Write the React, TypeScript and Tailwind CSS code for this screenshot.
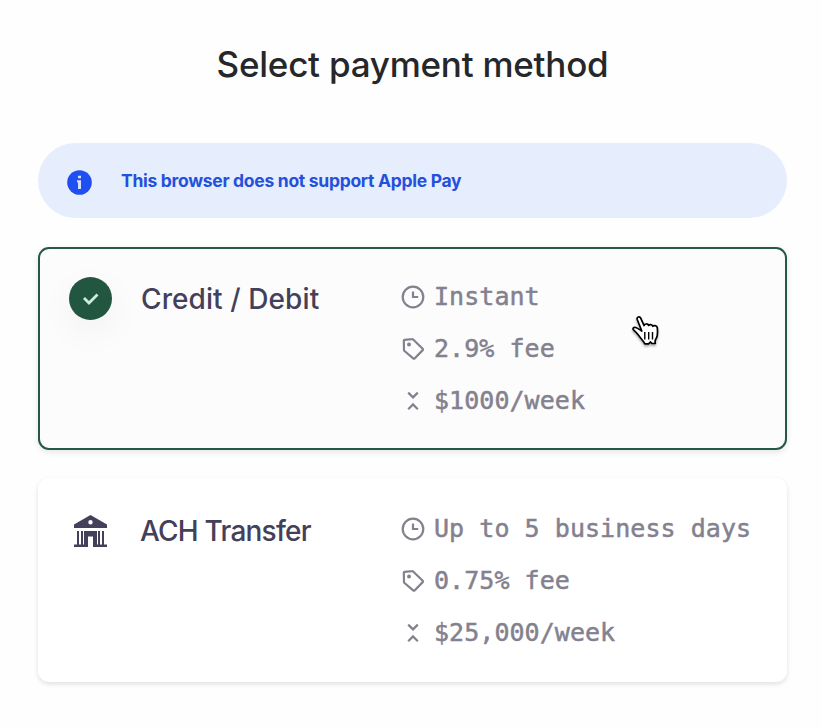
import React from "react";

const SANS = "font-['Inter','Liberation_Sans',sans-serif]";
const MONO = "font-['DejaVu_Sans_Mono','Liberation_Mono',monospace]";

function ClockIcon() {
  return (
    <svg width="24" height="24" viewBox="0 0 24 24" fill="none" stroke="currentColor" strokeWidth="2.2">
      <circle cx="12" cy="12" r="10.3" />
      <path d="M12 6.6V12h5.2" />
    </svg>
  );
}

function TagIcon() {
  return (
    <svg width="24" height="24" viewBox="0 0 24 24" fill="none" stroke="currentColor" strokeWidth="2.2" strokeLinejoin="round">
      <path d="M3.8 2.8 11 2.200q.8-.1 1.400.5l9.300 9q.7.7 0 1.400l-8.100 8.300q-.7.7-1.400 0L3.500 14q-.5-.5-.5-1.300L2.800 3.800q0-.9 1-1z" />
      <circle cx="8" cy="7.600" r="2" fill="currentColor" stroke="none" />
    </svg>
  );
}

function LimitIcon() {
  return (
    <svg width="24" height="24" viewBox="0 0 24 24" fill="none" stroke="currentColor" strokeWidth="2.2">
      <path d="m7.200 3.600 4.800 4.800 4.800-4.800M7.200 20.200l4.800-4.800 4.800 4.800" />
    </svg>
  );
}

function BankIcon() {
  return (
    <svg width="34" height="34" viewBox="0 0 34 34" fill="#444059">
      <path fillRule="evenodd" d="M16.500 1 33 10.600V14H0v-3.400zM16.500 6a2.200 2.200 0 1 0 0 4.400 2.200 2.200 0 0 0 0-4.400z" />
      <path d="M3 17h2v14H3zM7 17h2v14H7zM24 17h2v14h-2zM28 17h2v14h-2z" />
      <path d="M10 17h13v13.500h10V33H19V22.500h-5V33H0v-2.500h10z" />
    </svg>
  );
}

function Pointer() {
  return (
    <svg width="32" height="36" viewBox="0 0 32 36" className="absolute left-[590px] top-[65px] drop-shadow-[0_2px_1px_rgba(0,0,0,0.3)]">
      <path
        d="M11.800 17 7.200 5.500C6.400 3 9.700 1.900 10.700 4.200l3.400 7.400c.4-2.100 3.900-2.200 4.500-.1.700-1.400 3.600-1.200 4.200.8.900-1.300 4.100-.9 4.500 1.200.3 3.600.6 6.600-.5 9.700l-1.700 3.500.2 2.800-3.600-.2-1.100-1.300-2.100 1.800h-3.600c-1.500-3-3.500-4.600-5.300-7.100-1.900-2.500-3.300-4.600-5.600-6.400-2.200-1.700-.3-3.500 1.800-2.800 2.100.7 3.900 2.200 6 3.500z"
        fill="white"
        stroke="black"
        strokeWidth="1.700"
        strokeLinejoin="round"
      />
      <path d="M14.800 18v7.500M18.700 18v7.500M22.500 18v7.500" stroke="black" strokeWidth="1.400" />
    </svg>
  );
}

function Details({ time, fee, limit }: { time: string; fee: string; limit: string }) {
  const rows = [
    { icon: <ClockIcon />, text: time },
    { icon: <TagIcon />, text: fee },
    { icon: <LimitIcon />, text: limit },
  ];
  return (
    <ul className={`flex flex-col gap-4 text-[25px] leading-9 tracking-[0.050px] text-[#84818f] ${MONO}`}>
      {rows.map((row) => (
        <li key={row.text} className="flex items-center gap-[9px] whitespace-nowrap">
          {row.icon}
          <span className="[-webkit-text-stroke:0.5px_currentColor]">{row.text}</span>
        </li>
      ))}
    </ul>
  );
}

export default function App() {
  return (
    <main className={`flex h-[728px] w-full flex-col bg-[#fefefe] pl-[38px] pr-[35px] ${SANS}`}>
      <h1 className="mt-10 text-center text-[35px] font-medium leading-12 tracking-[-0.230px] text-[#25272a]">Select payment method</h1>

      <div className="mt-[55px] flex h-[75px] shrink-0 items-center rounded-full bg-[#e6edfc] pl-[29px]">
        <svg width="25" height="25" viewBox="0 0 25 25" className="mt-1">
          <circle cx="12.500" cy="12.500" r="12.300" fill="#1f4ff0" />
          <path d="M11 5.700h3v2.600h-3zM10 10.300h4V19h-3v-6.500h-1z" fill="#d5e0ff" />
        </svg>
        <span className="ml-[29px] mt-0.5 text-[17.500px] font-bold tracking-[-0.290px] text-[#2450dc]">This browser does not support Apple Pay</span>
      </div>

      <section className="relative mt-[29px] flex h-[203px] shrink-0 rounded-[11px] border-2 border-[#24594a] bg-[#fcfcfc] shadow-[0_2px_6px_rgba(0,0,0,0.10)]">
        <div className="flex w-[361px] items-start pl-[29px] pt-7">
          <div className="flex size-[43px] items-center justify-center rounded-full bg-[#235641] shadow-[0_12px_36px_rgba(0,0,0,0.05)]">
            <svg width="18" height="14" viewBox="0 0 18 14" fill="none" stroke="#cdeedd" strokeWidth="2.800">
              <path d="m2 6 5 5 8.500-8.500" />
            </svg>
          </div>
          <h2 className="ml-[29px] mt-px text-[28px] font-medium leading-[43px] tracking-[0.090px] text-[#444059]">Credit / Debit</h2>
        </div>
        <div className="pt-[30px]">
          <Details time="Instant" fee="2.9% fee" limit="$1000/week" />
        </div>
        <Pointer />
      </section>

      <section className="mt-7 flex h-[204px] shrink-0 rounded-[11px] bg-white shadow-[0_2px_5px_rgba(0,0,0,0.12)]">
        <div className="flex w-[363px] items-start pl-[36px] pt-8">
          <div className="flex h-[41px] w-[34px] items-center justify-center">
            <BankIcon />
          </div>
          <h2 className="ml-8 text-[28px] font-medium leading-[43px] tracking-[-0.780px] text-[#444059]">ACH Transfer</h2>
        </div>
        <div className="pt-[33px]">
          <Details time="Up to 5 business days" fee="0.75% fee" limit="$25,000/week" />
        </div>
      </section>
    </main>
  );
}
